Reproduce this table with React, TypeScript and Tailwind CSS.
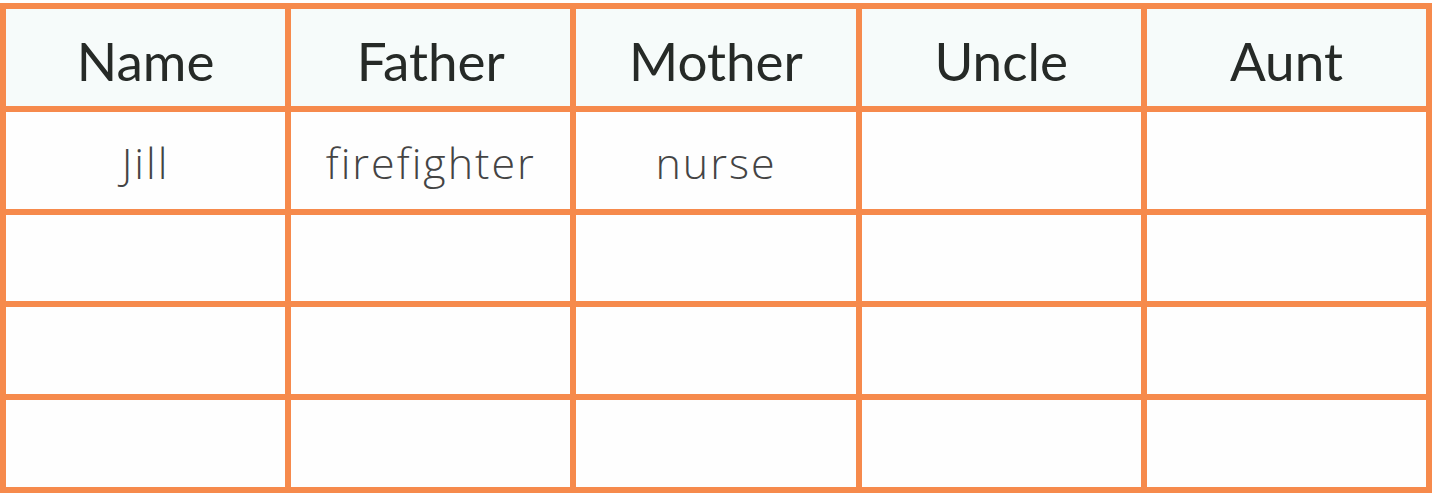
const HEADERS = ["Name", "Father", "Mother", "Uncle", "Aunt"];

const ROWS = [
  { h: "h-[97px]", cells: ["Jill", "firefighter", "nurse", "", ""] },
  { h: "h-[86px]", cells: ["", "", "", "", ""] },
  { h: "h-[87px]", cells: ["", "", "", "", ""] },
  { h: "h-[87px]", cells: ["", "", "", "", ""] },
];

export default function App() {
  return (
    <div className="w-[1435px] h-[495px] bg-white pt-[3px]">
      <div className="w-[1432px] grid grid-cols-5 gap-[6px] p-[6px] bg-[#f68a4c]">
        {HEADERS.map((h) => (
          <div
            key={h}
            className="h-[97px] bg-[#f6fbfa] flex items-center justify-center pt-[6px] text-[53px] text-[#262a27]"
            style={{ fontFamily: "Lato, 'Noto Sans', sans-serif" }}
          >
            {h}
          </div>
        ))}
        {ROWS.map((row, r) =>
          row.cells.map((c, i) => (
            <div
              key={`${r}-${i}`}
              className={`${row.h} bg-[#fefefe] flex items-center justify-center pt-[6px] text-[43px] tracking-[2px] font-light text-[#444444]`}
              style={{ fontFamily: "'Open Sans', 'Noto Sans', sans-serif" }}
            >
              {c}
            </div>
          ))
        )}
      </div>
    </div>
  );
}
